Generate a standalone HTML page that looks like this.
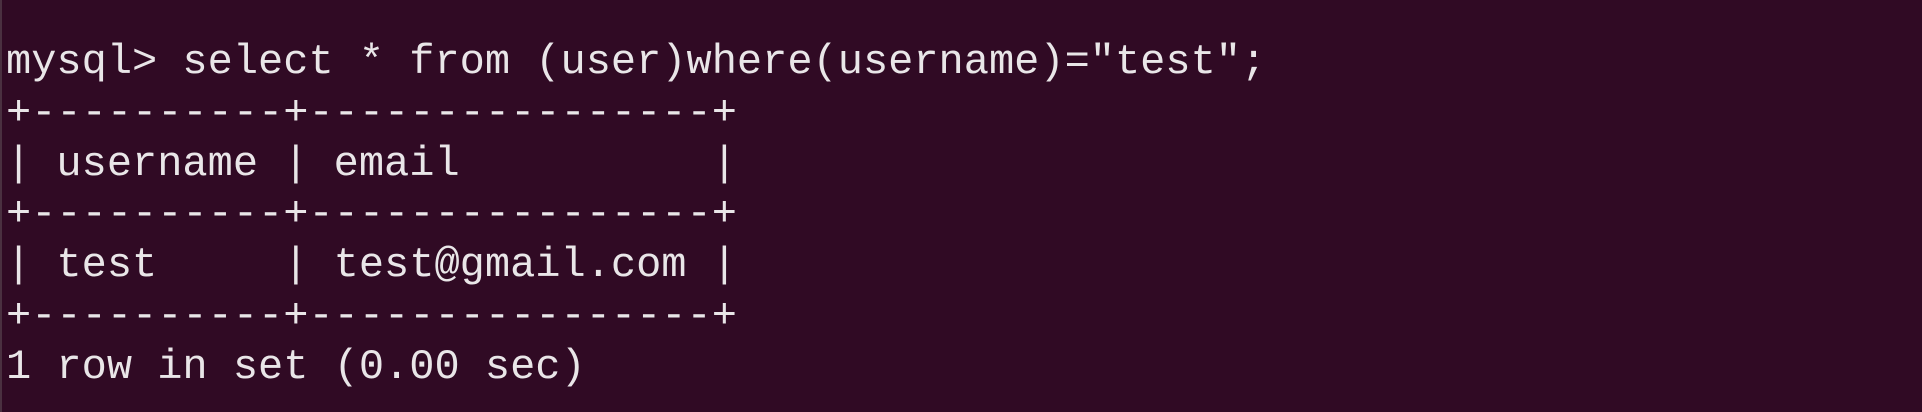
<!DOCTYPE html>
<html><head><meta charset="utf-8"><style>
html,body{margin:0;padding:0}
body{width:1922px;height:412px;background:#300a24;overflow:hidden;position:relative}
.edge{position:absolute;left:0;top:0;width:2px;height:412px;background:#4a3040}
pre{position:absolute;left:6px;top:37px;margin:0;font-family:"Liberation Mono",monospace;font-size:42px;line-height:50.8px;color:#e9e6e8;letter-spacing:0px}
</style></head><body><div class="edge"></div>
<pre>mysql&gt; select * from (user)where(username)="test";
+----------+----------------+
| username | email          |
+----------+----------------+
| test     | test@gmail.com |
+----------+----------------+
1 row in set (0.00 sec)</pre>
</body></html>
